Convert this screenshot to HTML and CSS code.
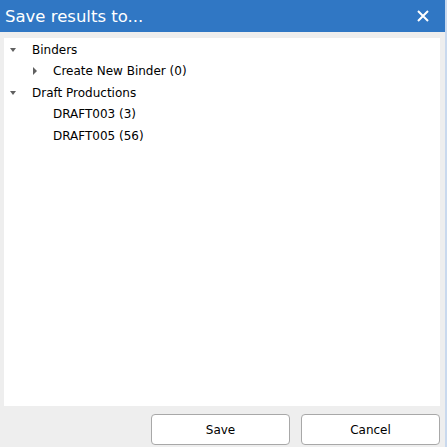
FILE: index.html
```html
<html>
<head>
	<title>Save results to...</title>
	<link rel="stylesheet" href="styles.css">
</head>
<body>
<div class="dialog">
	<div class="titlebar">
		<span class="title">Save results to...</span>
		<span class="close">
			<svg width="12" height="12" viewBox="0 0 12 12"><path d="M1 1 L11 11 M11 1 L1 11" stroke="#fff" stroke-width="2"/></svg>
		</span>
	</div>
	<div class="content">
		<ul class="tree">
			<li class="node open">
				<div class="row"><span class="toggle down"></span>Binders</div>
				<ul>
					<li class="node">
						<div class="row"><span class="toggle right"></span>Create New Binder (0)</div>
					</li>
				</ul>
			</li>
			<li class="node open">
				<div class="row"><span class="toggle down"></span>Draft Productions</div>
				<ul>
					<li class="node"><div class="row"><span class="toggle"></span>DRAFT003 (3)</div></li>
					<li class="node"><div class="row"><span class="toggle"></span>DRAFT005 (56)</div></li>
				</ul>
			</li>
		</ul>
	</div>
	<div class="buttons">
		<button class="btn">Save</button>
		<button class="btn">Cancel</button>
	</div>
</div>
</body>
</html>
```
FILE: styles.css
```css
html, body {
	margin: 0;
	padding: 0;
	height: 100%;
}
body {
	background: #eeeeee;
	font-family: "DejaVu Sans", Verdana, sans-serif;
}
.dialog {
	display: flex;
	flex-direction: column;
	height: 447px;
	width: 445px;
	border-right: 2px solid #c9d9ee;
	background: #eeeeee;
}
.titlebar {
	height: 32px;
	background: #3077c4;
	color: #fff;
	display: flex;
	align-items: center;
	justify-content: space-between;
	padding: 0 16px 0 5px;
}
.title {
	font-size: 16.5px;
}
.close {
	display: flex;
}
.content {
	flex: 1;
	background: #fff;
	margin: 6px 5px 0 4px;
	padding-top: 1px;
}
.tree, .tree ul {
	list-style: none;
	margin: 0;
	padding: 0;
}
.tree ul {
	padding-left: 21px;
}
.row {
	height: 21.5px;
	display: flex;
	align-items: center;
	font-size: 12px;
	color: #000;
}
.toggle {
	width: 28px;
	height: 10px;
	position: relative;
}
.toggle.down::before {
	content: "";
	position: absolute;
	left: 6px;
	top: 3px;
	border-left: 3.5px solid transparent;
	border-right: 3.5px solid transparent;
	border-top: 4px solid #606060;
}
.toggle.right::before {
	content: "";
	position: absolute;
	left: 8px;
	top: 1px;
	border-top: 4px solid transparent;
	border-bottom: 4px solid transparent;
	border-left: 4px solid #606060;
}
.buttons {
	height: 41px;
	display: flex;
	justify-content: flex-end;
	align-items: center;
	gap: 11px;
	padding: 0 5px 0 0;
}
.btn {
	width: 139px;
	height: 31px;
	background: #fff;
	border: 1px solid #a8a8a8;
	border-radius: 4px;
	font-family: "DejaVu Sans", Verdana, sans-serif;
	font-size: 12px;
	color: #000;
	margin-top: 6px;
}
```
